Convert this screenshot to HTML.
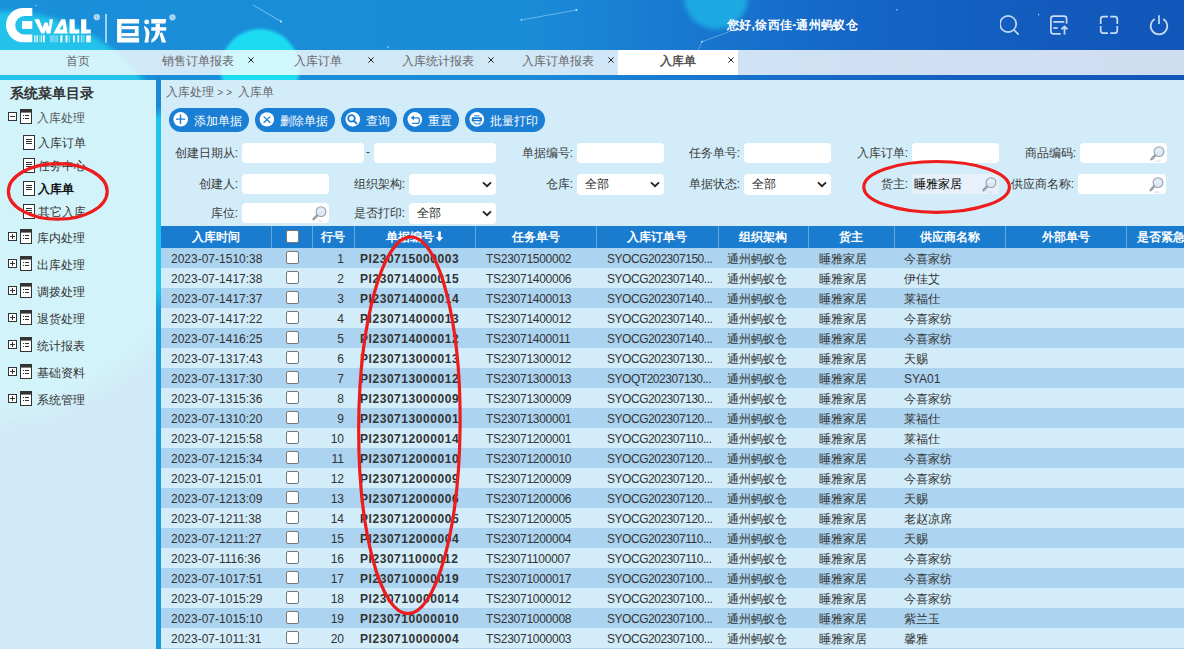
<!DOCTYPE html><html><head><meta charset="utf-8"><style>
*{margin:0;padding:0;box-sizing:border-box}
html,body{width:1184px;height:649px;overflow:hidden}
body{position:relative;background:#d2ecf9;font-family:"Liberation Sans",sans-serif;font-size:12px;color:#333}
.a{position:absolute}
#hdr{left:0;top:0;width:1184px;height:80px;overflow:hidden;background:linear-gradient(90deg,#1a8fda 0%,#1a8bd7 45%,#1878d0 58%,#1566c6 72%,#125bbd 88%,#1156b9 100%)}
#tabbar{left:0;top:50px;width:1184px;height:25px;background:rgba(255,255,255,0.8)}
.tab{position:absolute;top:50px;height:25px;width:120px;line-height:23px;text-align:center;color:#666;font-size:12px}
.tab.act{background:#fff;color:#555;font-weight:bold}
.tx{position:absolute;top:50px;height:25px;line-height:24px;font-size:11px;color:#234;width:10px;text-align:center}
#side{left:0;top:80px;width:156px;height:569px;background:#d0e9f6;overflow:hidden}
#vbar{left:156px;top:75px;width:5px;height:574px;background:linear-gradient(180deg,#1a86d6 0px,#1a8ad8 32px,#1ec6ee 45px,#1ec6ee 215px,#1b9fe0 235px,#1b97dd 574px)}
#main{left:161px;top:80px;width:1023px;height:569px;background:#d2ecf9}
.menu{position:absolute;font-size:12px;color:#333;line-height:14px;white-space:nowrap}
.btn{position:absolute;top:108px;height:24px;border-radius:12px;background:#1a7ed4;color:#fff;font-size:12px;line-height:25px;font-weight:500}
.btn .ic{position:absolute;left:4px;top:4px;width:16px;height:16px}
.btn span{position:absolute;left:25px;top:0.5px}
.lbl{position:absolute;font-size:12px;color:#3a3a3a;text-align:right;line-height:20px;white-space:nowrap}
.inp{position:absolute;height:20px;background:#fff;border-radius:4px}
.sel{position:absolute;height:21px;background:#fff;border-radius:4px;font-size:12px;line-height:21px;padding-left:8px;color:#222}
.chev{position:absolute;right:4px;top:7px;width:10px;height:7px}
.th{position:absolute;top:226px;height:22px;line-height:23px;color:#fff;font-weight:bold;font-size:12px;text-align:center;white-space:nowrap;overflow:hidden}
.sep{position:absolute;top:226px;width:1px;height:22px;background:#5fa8e4}
.row{position:absolute;left:161px;width:1023px;height:20px}
.c{position:absolute;line-height:20px;white-space:nowrap;font-size:12px;color:#333}
.cb{position:absolute;width:13px;height:13px;background:#fff;border:1px solid #777;border-radius:2px}
</style></head><body>
<div id="hdr" class="a">
<svg width="1184" height="80" style="position:absolute;left:0;top:0">
<defs>
<radialGradient id="g1" cx="0.5" cy="0.5" r="0.5"><stop offset="0" stop-color="#2bd0f0"/><stop offset="0.85" stop-color="#22c4ec"/><stop offset="1" stop-color="#22bde9"/></radialGradient>
</defs>
<filter id="bl"><feGaussianBlur stdDeviation="2.5"/></filter><circle cx="1" cy="193" r="182" fill="#22c2eb" filter="url(#bl)"/>
<circle cx="260" cy="68.6" r="39.5" fill="#1fdcf2" filter="url(#bl2)"/><filter id="bl2"><feGaussianBlur stdDeviation="1.5"/></filter>
<circle cx="716" cy="-3" r="32" fill="#1ba9e2" filter="url(#bl)"/>
<line x1="253" y1="5" x2="281" y2="21.5" stroke="#bfe6ff" stroke-width="0.8" opacity="0.75"/><circle cx="281" cy="21.5" r="0.9" fill="#d8f0ff"/>
<line x1="576.4" y1="10" x2="521.3" y2="20" stroke="#a8d8f8" stroke-width="0.8" opacity="0.7"/><circle cx="576.4" cy="10" r="1" fill="#cfeaff"/><circle cx="521.3" cy="20" r="0.8" fill="#cfeaff"/><circle cx="388" cy="47" r="0.8" fill="#cfeaff"/><circle cx="897" cy="9.7" r="0.8" fill="#cfeaff" opacity="0.8"/><circle cx="1038.6" cy="14.6" r="0.8" fill="#cfeaff" opacity="0.8"/><circle cx="36" cy="5.5" r="0.7" fill="#cfeaff" opacity="0.8"/>
<line x1="702" y1="41.7" x2="735" y2="29.5" stroke="#9fd0f5" stroke-width="0.8" opacity="0.6"/><circle cx="702" cy="41.7" r="0.9" fill="#cfeaff"/>
<line x1="702" y1="41.7" x2="697" y2="52" stroke="#9fd0f5" stroke-width="0.8" opacity="0.6"/>
</svg>
<svg width="200" height="50" style="position:absolute;left:0;top:0" fill="#fff">
<path d="M32.3,7.9 H23.1 A17.1,17.1 0 0 0 23.1,42.2 H32.3 V34.4 H24.4 A9.2,9.2 0 0 1 24.4,16 H32.3 Z"/>
<rect x="22" y="21.1" width="10.3" height="7.8"/>
<path d="M34.3,19.2 H39.2 L42.6,28 L44.5,22.5 L47.5,22.5 L49.2,27.5 L49.5,19.2 H53.1 L50.5,33.5 H46.8 L45.8,30 L44.4,33.5 H41.3 Z"/>
<path d="M53.4,33.5 L61.3,19.2 H65.3 L67.7,33.5 Z M59.4,29.6 H63.3 L62.6,24.4 Z" fill-rule="evenodd"/>
<path d="M69.5,19.2 H74.7 V29.5 H79.3 V33.5 H69.5 Z"/>
<path d="M81.1,19.2 H86.3 V29.5 H90.8 V33.5 H81.1 Z"/>
<g opacity="0.95">
<rect x="34.2" y="35.3" width="1.2" height="7"/><rect x="36.4" y="35.3" width="1.4" height="7"/>
<rect x="39.5" y="35.3" width="0.9" height="7" opacity="0.7"/><rect x="41.2" y="35.3" width="0.9" height="7"/><rect x="43" y="35.3" width="1.8" height="7"/>
<rect x="50.2" y="35.3" width="0.6" height="7" opacity="0.6"/><rect x="51.3" y="35.3" width="0.6" height="7" opacity="0.6"/><rect x="52.4" y="35.3" width="0.6" height="7" opacity="0.6"/><rect x="53.5" y="35.3" width="0.6" height="7" opacity="0.6"/><rect x="54.6" y="35.3" width="0.6" height="7" opacity="0.6"/><rect x="55.7" y="35.3" width="0.6" height="7" opacity="0.6"/><rect x="56.8" y="35.3" width="0.8" height="7" opacity="0.7"/>
<rect x="60.3" y="35.3" width="2.2" height="7"/><rect x="65.5" y="35.3" width="2" height="7"/><rect x="68.8" y="35.3" width="0.8" height="7" opacity="0.7"/>
<rect x="73" y="35.3" width="1.8" height="7"/><rect x="77.5" y="35.3" width="1.6" height="7"/><rect x="81.3" y="35.3" width="0.8" height="7"/><rect x="83.5" y="35.3" width="0.8" height="7" opacity="0.7"/>
<rect x="86.3" y="35.3" width="4.5" height="7"/>
</g>
<circle cx="96.8" cy="17.2" r="3.1" fill="#b8dcf5"/><circle cx="96.2" cy="16.2" r="0.7" fill="#5aaee6"/><circle cx="98.2" cy="17.4" r="0.6" fill="#5aaee6"/><circle cx="96.5" cy="18.6" r="0.6" fill="#5aaee6"/>
<rect x="105" y="14" width="2" height="28.7" fill="#9fd4f4"/>
<path d="M117.1,19.1 H139.1 V23.6 H121.5 V37.8 H139.1 V42.6 H117.1 Z"/>
<path d="M121.5,25.9 H138.6 V36.3 H121.5 V33 H134.8 V29.2 H121.5 Z"/>
<circle cx="146.7" cy="21.9" r="2.4"/>
<path d="M143.9,25.7 C148,27.5 150.2,31 149.3,35 C148.8,38 148.3,40.5 148.5,42.6 H144.4 C145,39 146,36 145.7,33 C145.4,30.5 144.5,28.5 143.9,25.7 Z"/>
<path d="M151.3,19.1 H166.2 L165.5,23.6 H151.3 Z"/>
<path d="M151.3,27.2 H166.2 V30.7 H151.3 Z"/>
<path d="M155.6,23.6 H159.9 V30.7 H155.6 Z"/>
<path d="M155.6,30.7 H159.9 C159.5,36 156.5,40.5 151.8,42.6 H151.2 L151.5,39.5 C154,38 155.4,34.5 155.6,30.7 Z"/>
<path d="M159.4,33 L162.3,32.6 L166.2,42.6 H161.8 Z"/>
<circle cx="172.5" cy="17.3" r="3.1" fill="#b8dcf5"/><circle cx="171.9" cy="16.3" r="0.7" fill="#5aaee6"/><circle cx="173.9" cy="17.5" r="0.6" fill="#5aaee6"/><circle cx="172.2" cy="18.7" r="0.6" fill="#5aaee6"/>
</svg>
<div class="a" style="left:727px;top:17.7px;color:#fff;font-weight:bold;font-size:12px;line-height:14px;white-space:nowrap;letter-spacing:0.3px">您好,徐西佳-通州蚂蚁仓</div>
<svg width="184" height="50" style="position:absolute;left:1000px;top:0" fill="none" stroke="#c9dbf3" stroke-width="1.7" stroke-linejoin="round">
<circle cx="8.1" cy="24" r="8.1"/><line x1="14" y1="30" x2="18.2" y2="34.1" stroke-linecap="round"/>
<path d="M66.6,23.8 V18.7 a2.5,2.5 0 0 0 -2.5,-2.5 H53.4 a2.5,2.5 0 0 0 -2.5,2.5 V31.3 a2.5,2.5 0 0 0 2.5,2.5 H60.7"/>
<line x1="53.3" y1="21.9" x2="64.3" y2="21.9"/><line x1="53.3" y1="28" x2="57.8" y2="28"/>
<path d="M64.5,34.4 V26.6 M61.5,29.4 L64.5,26.4 L67.5,29.4"/>
<path d="M100.7,24 V19.2 a2.5,2.5 0 0 1 2.5,-2.5 H108 M110.2,16.7 H114.8 a2.5,2.5 0 0 1 2.5,2.5 V24 M117.3,26 V30.6 a2.5,2.5 0 0 1 -2.5,2.5 H110.2 M108,33.1 H103.2 a2.5,2.5 0 0 1 -2.5,-2.5 V26"/>
<path d="M154.8,18.9 A8.3,8.3 0 1 0 163.2,18.9"/><line x1="159" y1="15.2" x2="159" y2="24"/>
</svg>
</div>
<div id="tabbar" class="a"></div>
<div class="tab" style="left:18px">首页</div>
<div class="tab" style="left:138px">销售订单报表</div>
<svg class="a" style="left:247.5px;top:56.5px" width="6" height="6"><path d="M0.4,0.4 L5.6,5.6 M5.6,0.4 L0.4,5.6" stroke="#222" stroke-width="1"/></svg>
<div class="tab" style="left:258px">入库订单</div>
<svg class="a" style="left:367.5px;top:56.5px" width="6" height="6"><path d="M0.4,0.4 L5.6,5.6 M5.6,0.4 L0.4,5.6" stroke="#222" stroke-width="1"/></svg>
<div class="tab" style="left:378px">入库统计报表</div>
<svg class="a" style="left:487.5px;top:56.5px" width="6" height="6"><path d="M0.4,0.4 L5.6,5.6 M5.6,0.4 L0.4,5.6" stroke="#222" stroke-width="1"/></svg>
<div class="tab" style="left:498px">入库订单报表</div>
<svg class="a" style="left:607.5px;top:56.5px" width="6" height="6"><path d="M0.4,0.4 L5.6,5.6 M5.6,0.4 L0.4,5.6" stroke="#222" stroke-width="1"/></svg>
<div class="tab act" style="left:618px">入库单</div>
<svg class="a" style="left:727.5px;top:56.5px" width="6" height="6"><path d="M0.4,0.4 L5.6,5.6 M5.6,0.4 L0.4,5.6" stroke="#222" stroke-width="1"/></svg>
<div id="side" class="a"><svg width="156" height="569" style="position:absolute;left:0;top:0"><filter id="bl3" x="-50%" y="-50%" width="200%" height="200%"><feGaussianBlur stdDeviation="12"/></filter><circle cx="-20" cy="100" r="240" fill="#d3f3fb" filter="url(#bl3)"/></svg></div>
<div id="vbar" class="a"></div>
<div class="menu" style="left:10px;top:86px;font-size:14px;line-height:15px;font-weight:bold;color:#333">系统菜单目录</div>
<svg class="a" style="left:8px;top:112px" width="10" height="10"><rect x="0.5" y="0.5" width="8" height="8" fill="#fff" stroke="#333"/><line x1="2" y1="4.5" x2="7" y2="4.5" stroke="#333"/></svg>
<svg class="a" style="left:20px;top:109px" width="13" height="16"><rect x="0.5" y="0.5" width="11" height="14" fill="#fff" stroke="#333"/><rect x="0" y="0" width="12" height="3.6" fill="#333"/><rect x="3" y="6" width="1" height="1" fill="#333"/><rect x="5" y="6" width="4" height="1" fill="#333"/><rect x="3" y="9" width="1" height="1" fill="#333"/><rect x="5" y="9" width="4" height="1" fill="#333"/></svg>
<div class="menu" style="left:37px;top:111px;color:#555">入库处理</div>
<svg class="a" style="left:23px;top:135px" width="13" height="16"><rect x="0.5" y="0.5" width="11" height="14" fill="#fff" stroke="#333"/><rect x="3" y="4" width="6" height="1" fill="#333"/><rect x="3" y="6" width="6" height="1" fill="#333"/><rect x="3" y="8" width="6" height="1" fill="#333"/></svg>
<div class="menu" style="left:38px;top:136px;">入库订单</div>
<svg class="a" style="left:23px;top:158px" width="13" height="16"><rect x="0.5" y="0.5" width="11" height="14" fill="#fff" stroke="#333"/><rect x="3" y="4" width="6" height="1" fill="#333"/><rect x="3" y="6" width="6" height="1" fill="#333"/><rect x="3" y="8" width="6" height="1" fill="#333"/></svg>
<div class="menu" style="left:38px;top:159px;">任务中心</div>
<svg class="a" style="left:23px;top:181px" width="13" height="16"><rect x="0.5" y="0.5" width="11" height="14" fill="#fff" stroke="#333"/><rect x="3" y="4" width="6" height="1" fill="#333"/><rect x="3" y="6" width="6" height="1" fill="#333"/><rect x="3" y="8" width="6" height="1" fill="#333"/></svg>
<div class="menu" style="left:38px;top:182px;font-weight:bold;color:#111">入库单</div>
<svg class="a" style="left:23px;top:204px" width="13" height="16"><rect x="0.5" y="0.5" width="11" height="14" fill="#fff" stroke="#333"/><rect x="3" y="4" width="6" height="1" fill="#333"/><rect x="3" y="6" width="6" height="1" fill="#333"/><rect x="3" y="8" width="6" height="1" fill="#333"/></svg>
<div class="menu" style="left:38px;top:205px;">其它入库</div>
<svg class="a" style="left:8px;top:232px" width="10" height="10"><rect x="0.5" y="0.5" width="8" height="8" fill="#fff" stroke="#333"/><line x1="2" y1="4.5" x2="7" y2="4.5" stroke="#333"/><line x1="4.5" y1="2" x2="4.5" y2="7" stroke="#333"/></svg>
<svg class="a" style="left:20px;top:229px" width="13" height="16"><rect x="0.5" y="0.5" width="11" height="14" fill="#fff" stroke="#333"/><rect x="0" y="0" width="12" height="3.6" fill="#333"/><rect x="3" y="6" width="1" height="1" fill="#333"/><rect x="5" y="6" width="4" height="1" fill="#333"/><rect x="3" y="9" width="1" height="1" fill="#333"/><rect x="5" y="9" width="4" height="1" fill="#333"/></svg>
<div class="menu" style="left:37px;top:231px">库内处理</div>
<svg class="a" style="left:8px;top:259px" width="10" height="10"><rect x="0.5" y="0.5" width="8" height="8" fill="#fff" stroke="#333"/><line x1="2" y1="4.5" x2="7" y2="4.5" stroke="#333"/><line x1="4.5" y1="2" x2="4.5" y2="7" stroke="#333"/></svg>
<svg class="a" style="left:20px;top:256px" width="13" height="16"><rect x="0.5" y="0.5" width="11" height="14" fill="#fff" stroke="#333"/><rect x="0" y="0" width="12" height="3.6" fill="#333"/><rect x="3" y="6" width="1" height="1" fill="#333"/><rect x="5" y="6" width="4" height="1" fill="#333"/><rect x="3" y="9" width="1" height="1" fill="#333"/><rect x="5" y="9" width="4" height="1" fill="#333"/></svg>
<div class="menu" style="left:37px;top:258px">出库处理</div>
<svg class="a" style="left:8px;top:286px" width="10" height="10"><rect x="0.5" y="0.5" width="8" height="8" fill="#fff" stroke="#333"/><line x1="2" y1="4.5" x2="7" y2="4.5" stroke="#333"/><line x1="4.5" y1="2" x2="4.5" y2="7" stroke="#333"/></svg>
<svg class="a" style="left:20px;top:283px" width="13" height="16"><rect x="0.5" y="0.5" width="11" height="14" fill="#fff" stroke="#333"/><rect x="0" y="0" width="12" height="3.6" fill="#333"/><rect x="3" y="6" width="1" height="1" fill="#333"/><rect x="5" y="6" width="4" height="1" fill="#333"/><rect x="3" y="9" width="1" height="1" fill="#333"/><rect x="5" y="9" width="4" height="1" fill="#333"/></svg>
<div class="menu" style="left:37px;top:285px">调拨处理</div>
<svg class="a" style="left:8px;top:313px" width="10" height="10"><rect x="0.5" y="0.5" width="8" height="8" fill="#fff" stroke="#333"/><line x1="2" y1="4.5" x2="7" y2="4.5" stroke="#333"/><line x1="4.5" y1="2" x2="4.5" y2="7" stroke="#333"/></svg>
<svg class="a" style="left:20px;top:310px" width="13" height="16"><rect x="0.5" y="0.5" width="11" height="14" fill="#fff" stroke="#333"/><rect x="0" y="0" width="12" height="3.6" fill="#333"/><rect x="3" y="6" width="1" height="1" fill="#333"/><rect x="5" y="6" width="4" height="1" fill="#333"/><rect x="3" y="9" width="1" height="1" fill="#333"/><rect x="5" y="9" width="4" height="1" fill="#333"/></svg>
<div class="menu" style="left:37px;top:312px">退货处理</div>
<svg class="a" style="left:8px;top:340px" width="10" height="10"><rect x="0.5" y="0.5" width="8" height="8" fill="#fff" stroke="#333"/><line x1="2" y1="4.5" x2="7" y2="4.5" stroke="#333"/><line x1="4.5" y1="2" x2="4.5" y2="7" stroke="#333"/></svg>
<svg class="a" style="left:20px;top:337px" width="13" height="16"><rect x="0.5" y="0.5" width="11" height="14" fill="#fff" stroke="#333"/><rect x="0" y="0" width="12" height="3.6" fill="#333"/><rect x="3" y="6" width="1" height="1" fill="#333"/><rect x="5" y="6" width="4" height="1" fill="#333"/><rect x="3" y="9" width="1" height="1" fill="#333"/><rect x="5" y="9" width="4" height="1" fill="#333"/></svg>
<div class="menu" style="left:37px;top:339px">统计报表</div>
<svg class="a" style="left:8px;top:367px" width="10" height="10"><rect x="0.5" y="0.5" width="8" height="8" fill="#fff" stroke="#333"/><line x1="2" y1="4.5" x2="7" y2="4.5" stroke="#333"/><line x1="4.5" y1="2" x2="4.5" y2="7" stroke="#333"/></svg>
<svg class="a" style="left:20px;top:364px" width="13" height="16"><rect x="0.5" y="0.5" width="11" height="14" fill="#fff" stroke="#333"/><rect x="0" y="0" width="12" height="3.6" fill="#333"/><rect x="3" y="6" width="1" height="1" fill="#333"/><rect x="5" y="6" width="4" height="1" fill="#333"/><rect x="3" y="9" width="1" height="1" fill="#333"/><rect x="5" y="9" width="4" height="1" fill="#333"/></svg>
<div class="menu" style="left:37px;top:366px">基础资料</div>
<svg class="a" style="left:8px;top:394px" width="10" height="10"><rect x="0.5" y="0.5" width="8" height="8" fill="#fff" stroke="#333"/><line x1="2" y1="4.5" x2="7" y2="4.5" stroke="#333"/><line x1="4.5" y1="2" x2="4.5" y2="7" stroke="#333"/></svg>
<svg class="a" style="left:20px;top:391px" width="13" height="16"><rect x="0.5" y="0.5" width="11" height="14" fill="#fff" stroke="#333"/><rect x="0" y="0" width="12" height="3.6" fill="#333"/><rect x="3" y="6" width="1" height="1" fill="#333"/><rect x="5" y="6" width="4" height="1" fill="#333"/><rect x="3" y="9" width="1" height="1" fill="#333"/><rect x="5" y="9" width="4" height="1" fill="#333"/></svg>
<div class="menu" style="left:37px;top:393px">系统管理</div>
<div class="a" style="left:166px;top:85px;font-size:12px;color:#666;line-height:14px;white-space:nowrap">入库处理 <span style="font-size:10px;letter-spacing:3px;vertical-align:0.5px">&gt;</span><span style="font-size:10px;vertical-align:0.5px">&gt;</span><span style="letter-spacing:3px"> </span>入库单</div>
<div class="btn" style="left:169px;width:80px"><svg class="ic" width="16" height="16"><circle cx="7.7" cy="7.3" r="7.3" fill="#fff"/><path d="M7.5,2.6 V11.9 M3,7.1 H12.2" stroke="#1a7ed4" stroke-width="1.4"/></svg><span>添加单据</span></div>
<div class="btn" style="left:255px;width:80px"><svg class="ic" width="16" height="16"><circle cx="7.9" cy="7.4" r="7.2" fill="#fff"/><path d="M5,4.9 L10.9,10.5 M10.9,4.9 L5,10.5" stroke="#1a7ed4" stroke-width="1.3" stroke-linecap="round"/></svg><span>删除单据</span></div>
<div class="btn" style="left:341px;width:56px"><svg class="ic" width="16" height="16"><circle cx="7.8" cy="7.4" r="7.3" fill="#fff"/><circle cx="6.5" cy="6.4" r="3.3" fill="none" stroke="#1a7ed4" stroke-width="1.8"/><path d="M8.8,8.8 L11.5,11.4" stroke="#1a7ed4" stroke-width="1.9" stroke-linecap="round"/></svg><span>查询</span></div>
<div class="btn" style="left:403px;width:56px"><svg class="ic" width="16" height="16"><circle cx="7.8" cy="7.4" r="7.3" fill="#fff"/><path d="M6.5,5.8 H11 Q12.3,5.8 12.3,7.6 V9.3 Q12.3,11.3 10.5,11.3 H5.2" fill="none" stroke="#1a7ed4" stroke-width="1.3"/><path d="M3.6,5.8 L7,3.4 L7,8.2 Z" fill="#1a7ed4"/></svg><span>重置</span></div>
<div class="btn" style="left:465px;width:80px"><svg class="ic" width="16" height="16"><circle cx="7.8" cy="7.4" r="7.3" fill="#fff"/><rect x="5" y="3.3" width="5.6" height="1" fill="#1a7ed4"/><rect x="2.7" y="5.3" width="10.2" height="4.2" rx="0.8" fill="#1a7ed4"/><rect x="4.8" y="7.2" width="6" height="0.8" fill="#fff"/><path d="M4.5,9.5 L6.3,12 H11 L11,9.5" fill="#fff" stroke="#1a7ed4" stroke-width="1"/></svg><span>批量打印</span></div>
<div class="lbl" style="left:78px;width:160px;top:143px">创建日期从:</div>
<div class="inp" style="left:242px;top:143px;width:122px"></div>
<div class="a" style="left:366px;top:143px;line-height:18px;color:#444">-</div>
<div class="inp" style="left:374px;top:143px;width:122px"></div>
<div class="lbl" style="left:413px;width:160px;top:143px">单据编号:</div>
<div class="inp" style="left:577px;top:143px;width:87px"></div>
<div class="lbl" style="left:580px;width:160px;top:143px">任务单号:</div>
<div class="inp" style="left:744px;top:143px;width:87px"></div>
<div class="lbl" style="left:748px;width:160px;top:143px">入库订单:</div>
<div class="inp" style="left:912px;top:143px;width:87px"></div>
<div class="lbl" style="left:916px;width:160px;top:143px">商品编码:</div>
<div class="inp" style="left:1080px;top:143px;width:87px"><svg class="a" style="right:1.5px;top:2px" width="17" height="17"><defs><linearGradient id="sh" x1="0" x2="1"><stop offset="0" stop-color="#fff" stop-opacity="0"/><stop offset="0.5" stop-color="#c8ccd0"/><stop offset="1" stop-color="#fff" stop-opacity="0"/></linearGradient></defs><rect x="3" y="15.6" width="12" height="1" fill="url(#sh)"/><path d="M6.4,10.2 L2.6,14.2" stroke="#8c949c" stroke-width="2.4" stroke-linecap="round"/><path d="M6.4,10.2 L2.6,14.2" stroke="#e6e8ea" stroke-width="0.8" stroke-dasharray="1,1"/><circle cx="10" cy="6.6" r="4.9" fill="#dce8f5" stroke="#9aa2aa" stroke-width="1.1"/><path d="M6.5,6.5 Q8.5,4.5 13.5,5" fill="none" stroke="#f4f8fc" stroke-width="0.9"/></svg></div>
<div class="lbl" style="left:78px;width:160px;top:174px">创建人:</div>
<div class="inp" style="left:242px;top:174px;width:87px"></div>
<div class="lbl" style="left:245px;width:160px;top:174px">组织架构:</div>
<div class="sel" style="left:409px;top:174px;width:87px"><svg class="chev" width="10" height="7"><path d="M1,1.3 L5,5.2 L9,1.3" fill="none" stroke="#222" stroke-width="1.8"/></svg></div>
<div class="lbl" style="left:413px;width:160px;top:174px">仓库:</div>
<div class="sel" style="left:577px;top:174px;width:87px">全部<svg class="chev" width="10" height="7"><path d="M1,1.3 L5,5.2 L9,1.3" fill="none" stroke="#222" stroke-width="1.8"/></svg></div>
<div class="lbl" style="left:580px;width:160px;top:174px">单据状态:</div>
<div class="sel" style="left:744px;top:174px;width:87px">全部<svg class="chev" width="10" height="7"><path d="M1,1.3 L5,5.2 L9,1.3" fill="none" stroke="#222" stroke-width="1.8"/></svg></div>
<div class="lbl" style="left:748px;width:160px;top:174px">货主:</div>
<div class="inp" style="left:912px;top:174px;width:87px;background:#e8f0fb;line-height:20px;padding-left:2px;color:#000;font-size:12px">睡雅家居<svg class="a" style="right:1.5px;top:2px" width="17" height="17"><defs><linearGradient id="sh" x1="0" x2="1"><stop offset="0" stop-color="#fff" stop-opacity="0"/><stop offset="0.5" stop-color="#c8ccd0"/><stop offset="1" stop-color="#fff" stop-opacity="0"/></linearGradient></defs><rect x="3" y="15.6" width="12" height="1" fill="url(#sh)"/><path d="M6.4,10.2 L2.6,14.2" stroke="#8c949c" stroke-width="2.4" stroke-linecap="round"/><path d="M6.4,10.2 L2.6,14.2" stroke="#e6e8ea" stroke-width="0.8" stroke-dasharray="1,1"/><circle cx="10" cy="6.6" r="4.9" fill="#dce8f5" stroke="#9aa2aa" stroke-width="1.1"/><path d="M6.5,6.5 Q8.5,4.5 13.5,5" fill="none" stroke="#f4f8fc" stroke-width="0.9"/></svg></div>
<div class="lbl" style="left:914px;width:160px;top:174px">供应商名称:</div>
<div class="inp" style="left:1078px;top:174px;width:88px"><svg class="a" style="right:1.5px;top:2px" width="17" height="17"><defs><linearGradient id="sh" x1="0" x2="1"><stop offset="0" stop-color="#fff" stop-opacity="0"/><stop offset="0.5" stop-color="#c8ccd0"/><stop offset="1" stop-color="#fff" stop-opacity="0"/></linearGradient></defs><rect x="3" y="15.6" width="12" height="1" fill="url(#sh)"/><path d="M6.4,10.2 L2.6,14.2" stroke="#8c949c" stroke-width="2.4" stroke-linecap="round"/><path d="M6.4,10.2 L2.6,14.2" stroke="#e6e8ea" stroke-width="0.8" stroke-dasharray="1,1"/><circle cx="10" cy="6.6" r="4.9" fill="#dce8f5" stroke="#9aa2aa" stroke-width="1.1"/><path d="M6.5,6.5 Q8.5,4.5 13.5,5" fill="none" stroke="#f4f8fc" stroke-width="0.9"/></svg></div>
<div class="lbl" style="left:78px;width:160px;top:203px">库位:</div>
<div class="inp" style="left:242px;top:203px;width:87px"><svg class="a" style="right:1.5px;top:2px" width="17" height="17"><defs><linearGradient id="sh" x1="0" x2="1"><stop offset="0" stop-color="#fff" stop-opacity="0"/><stop offset="0.5" stop-color="#c8ccd0"/><stop offset="1" stop-color="#fff" stop-opacity="0"/></linearGradient></defs><rect x="3" y="15.6" width="12" height="1" fill="url(#sh)"/><path d="M6.4,10.2 L2.6,14.2" stroke="#8c949c" stroke-width="2.4" stroke-linecap="round"/><path d="M6.4,10.2 L2.6,14.2" stroke="#e6e8ea" stroke-width="0.8" stroke-dasharray="1,1"/><circle cx="10" cy="6.6" r="4.9" fill="#dce8f5" stroke="#9aa2aa" stroke-width="1.1"/><path d="M6.5,6.5 Q8.5,4.5 13.5,5" fill="none" stroke="#f4f8fc" stroke-width="0.9"/></svg></div>
<div class="lbl" style="left:245px;width:160px;top:203px">是否打印:</div>
<div class="sel" style="left:409px;top:203px;width:87px">全部<svg class="chev" width="10" height="7"><path d="M1,1.3 L5,5.2 L9,1.3" fill="none" stroke="#222" stroke-width="1.8"/></svg></div>
<div class="a" style="left:161px;top:226px;width:1023px;height:22px;background:#1a7ccf"></div>
<div class="th" style="left:161px;width:110px">入库时间</div>
<div class="cb" style="left:286px;top:230px"></div>
<div class="sep" style="left:271px"></div>
<div class="th" style="left:312px;width:42px">行号</div>
<div class="sep" style="left:312px"></div>
<div class="th" style="left:354px;width:121px">单据编号<svg width="9" height="11" style="vertical-align:-1px;margin-left:1px"><path d="M4.5,10.5 L0.8,6.3 H3.2 V0.5 H5.8 V6.3 H8.2 Z" fill="#fff"/></svg></div>
<div class="sep" style="left:354px"></div>
<div class="th" style="left:475px;width:121px">任务单号</div>
<div class="sep" style="left:475px"></div>
<div class="th" style="left:596px;width:122px">入库订单号</div>
<div class="sep" style="left:596px"></div>
<div class="th" style="left:718px;width:90px">组织架构</div>
<div class="sep" style="left:718px"></div>
<div class="th" style="left:808px;width:86px">货主</div>
<div class="sep" style="left:808px"></div>
<div class="th" style="left:894px;width:111px">供应商名称</div>
<div class="sep" style="left:894px"></div>
<div class="th" style="left:1005px;width:121px">外部单号</div>
<div class="sep" style="left:1005px"></div>
<div class="th" style="left:1126px;width:70px">是否紧急</div>
<div class="sep" style="left:1126px"></div>
<div class="row" style="top:248px;background:#acd3ef"></div>
<div class="c" style="left:171px;top:249px">2023-07-1510:38</div>
<div class="cb" style="left:286px;top:251px"></div>
<div class="c" style="left:312px;width:32px;text-align:right;top:249px">1</div>
<div class="c" style="left:360px;top:249px;font-weight:bold;letter-spacing:0.55px">PI230715000003</div>
<div class="c" style="left:486px;top:249px;letter-spacing:-0.27px">TS23071500002</div>
<div class="c" style="left:607px;top:249px;letter-spacing:-0.47px">SYOCG202307150...</div>
<div class="c" style="left:727px;top:249px">通州蚂蚁仓</div>
<div class="c" style="left:819px;top:249px">睡雅家居</div>
<div class="c" style="left:904px;top:249px">今喜家纺</div>
<div class="row" style="top:268px;background:#d2ecf9"></div>
<div class="c" style="left:171px;top:269px">2023-07-1417:38</div>
<div class="cb" style="left:286px;top:271px"></div>
<div class="c" style="left:312px;width:32px;text-align:right;top:269px">2</div>
<div class="c" style="left:360px;top:269px;font-weight:bold;letter-spacing:0.55px">PI230714000015</div>
<div class="c" style="left:486px;top:269px;letter-spacing:-0.27px">TS23071400006</div>
<div class="c" style="left:607px;top:269px;letter-spacing:-0.47px">SYOCG202307140...</div>
<div class="c" style="left:727px;top:269px">通州蚂蚁仓</div>
<div class="c" style="left:819px;top:269px">睡雅家居</div>
<div class="c" style="left:904px;top:269px">伊佳艾</div>
<div class="row" style="top:288px;background:#acd3ef"></div>
<div class="c" style="left:171px;top:289px">2023-07-1417:37</div>
<div class="cb" style="left:286px;top:291px"></div>
<div class="c" style="left:312px;width:32px;text-align:right;top:289px">3</div>
<div class="c" style="left:360px;top:289px;font-weight:bold;letter-spacing:0.55px">PI230714000014</div>
<div class="c" style="left:486px;top:289px;letter-spacing:-0.27px">TS23071400013</div>
<div class="c" style="left:607px;top:289px;letter-spacing:-0.47px">SYOCG202307140...</div>
<div class="c" style="left:727px;top:289px">通州蚂蚁仓</div>
<div class="c" style="left:819px;top:289px">睡雅家居</div>
<div class="c" style="left:904px;top:289px">莱福仕</div>
<div class="row" style="top:308px;background:#d2ecf9"></div>
<div class="c" style="left:171px;top:309px">2023-07-1417:22</div>
<div class="cb" style="left:286px;top:311px"></div>
<div class="c" style="left:312px;width:32px;text-align:right;top:309px">4</div>
<div class="c" style="left:360px;top:309px;font-weight:bold;letter-spacing:0.55px">PI230714000013</div>
<div class="c" style="left:486px;top:309px;letter-spacing:-0.27px">TS23071400012</div>
<div class="c" style="left:607px;top:309px;letter-spacing:-0.47px">SYOCG202307140...</div>
<div class="c" style="left:727px;top:309px">通州蚂蚁仓</div>
<div class="c" style="left:819px;top:309px">睡雅家居</div>
<div class="c" style="left:904px;top:309px">今喜家纺</div>
<div class="row" style="top:328px;background:#acd3ef"></div>
<div class="c" style="left:171px;top:329px">2023-07-1416:25</div>
<div class="cb" style="left:286px;top:331px"></div>
<div class="c" style="left:312px;width:32px;text-align:right;top:329px">5</div>
<div class="c" style="left:360px;top:329px;font-weight:bold;letter-spacing:0.55px">PI230714000012</div>
<div class="c" style="left:486px;top:329px;letter-spacing:-0.27px">TS23071400011</div>
<div class="c" style="left:607px;top:329px;letter-spacing:-0.47px">SYOCG202307140...</div>
<div class="c" style="left:727px;top:329px">通州蚂蚁仓</div>
<div class="c" style="left:819px;top:329px">睡雅家居</div>
<div class="c" style="left:904px;top:329px">今喜家纺</div>
<div class="row" style="top:348px;background:#d2ecf9"></div>
<div class="c" style="left:171px;top:349px">2023-07-1317:43</div>
<div class="cb" style="left:286px;top:351px"></div>
<div class="c" style="left:312px;width:32px;text-align:right;top:349px">6</div>
<div class="c" style="left:360px;top:349px;font-weight:bold;letter-spacing:0.55px">PI230713000013</div>
<div class="c" style="left:486px;top:349px;letter-spacing:-0.27px">TS23071300012</div>
<div class="c" style="left:607px;top:349px;letter-spacing:-0.47px">SYOCG202307130...</div>
<div class="c" style="left:727px;top:349px">通州蚂蚁仓</div>
<div class="c" style="left:819px;top:349px">睡雅家居</div>
<div class="c" style="left:904px;top:349px">天赐</div>
<div class="row" style="top:368px;background:#acd3ef"></div>
<div class="c" style="left:171px;top:369px">2023-07-1317:30</div>
<div class="cb" style="left:286px;top:371px"></div>
<div class="c" style="left:312px;width:32px;text-align:right;top:369px">7</div>
<div class="c" style="left:360px;top:369px;font-weight:bold;letter-spacing:0.55px">PI230713000012</div>
<div class="c" style="left:486px;top:369px;letter-spacing:-0.27px">TS23071300013</div>
<div class="c" style="left:607px;top:369px;letter-spacing:-0.47px">SYOQT202307130...</div>
<div class="c" style="left:727px;top:369px">通州蚂蚁仓</div>
<div class="c" style="left:819px;top:369px">睡雅家居</div>
<div class="c" style="left:904px;top:369px">SYA01</div>
<div class="row" style="top:388px;background:#d2ecf9"></div>
<div class="c" style="left:171px;top:389px">2023-07-1315:36</div>
<div class="cb" style="left:286px;top:391px"></div>
<div class="c" style="left:312px;width:32px;text-align:right;top:389px">8</div>
<div class="c" style="left:360px;top:389px;font-weight:bold;letter-spacing:0.55px">PI230713000009</div>
<div class="c" style="left:486px;top:389px;letter-spacing:-0.27px">TS23071300009</div>
<div class="c" style="left:607px;top:389px;letter-spacing:-0.47px">SYOCG202307130...</div>
<div class="c" style="left:727px;top:389px">通州蚂蚁仓</div>
<div class="c" style="left:819px;top:389px">睡雅家居</div>
<div class="c" style="left:904px;top:389px">今喜家纺</div>
<div class="row" style="top:408px;background:#acd3ef"></div>
<div class="c" style="left:171px;top:409px">2023-07-1310:20</div>
<div class="cb" style="left:286px;top:411px"></div>
<div class="c" style="left:312px;width:32px;text-align:right;top:409px">9</div>
<div class="c" style="left:360px;top:409px;font-weight:bold;letter-spacing:0.55px">PI230713000001</div>
<div class="c" style="left:486px;top:409px;letter-spacing:-0.27px">TS23071300001</div>
<div class="c" style="left:607px;top:409px;letter-spacing:-0.47px">SYOCG202307120...</div>
<div class="c" style="left:727px;top:409px">通州蚂蚁仓</div>
<div class="c" style="left:819px;top:409px">睡雅家居</div>
<div class="c" style="left:904px;top:409px">莱福仕</div>
<div class="row" style="top:428px;background:#d2ecf9"></div>
<div class="c" style="left:171px;top:429px">2023-07-1215:58</div>
<div class="cb" style="left:286px;top:431px"></div>
<div class="c" style="left:312px;width:32px;text-align:right;top:429px">10</div>
<div class="c" style="left:360px;top:429px;font-weight:bold;letter-spacing:0.55px">PI230712000014</div>
<div class="c" style="left:486px;top:429px;letter-spacing:-0.27px">TS23071200001</div>
<div class="c" style="left:607px;top:429px;letter-spacing:-0.47px">SYOCG202307110...</div>
<div class="c" style="left:727px;top:429px">通州蚂蚁仓</div>
<div class="c" style="left:819px;top:429px">睡雅家居</div>
<div class="c" style="left:904px;top:429px">莱福仕</div>
<div class="row" style="top:448px;background:#acd3ef"></div>
<div class="c" style="left:171px;top:449px">2023-07-1215:34</div>
<div class="cb" style="left:286px;top:451px"></div>
<div class="c" style="left:312px;width:32px;text-align:right;top:449px">11</div>
<div class="c" style="left:360px;top:449px;font-weight:bold;letter-spacing:0.55px">PI230712000010</div>
<div class="c" style="left:486px;top:449px;letter-spacing:-0.27px">TS23071200010</div>
<div class="c" style="left:607px;top:449px;letter-spacing:-0.47px">SYOCG202307120...</div>
<div class="c" style="left:727px;top:449px">通州蚂蚁仓</div>
<div class="c" style="left:819px;top:449px">睡雅家居</div>
<div class="c" style="left:904px;top:449px">今喜家纺</div>
<div class="row" style="top:468px;background:#d2ecf9"></div>
<div class="c" style="left:171px;top:469px">2023-07-1215:01</div>
<div class="cb" style="left:286px;top:471px"></div>
<div class="c" style="left:312px;width:32px;text-align:right;top:469px">12</div>
<div class="c" style="left:360px;top:469px;font-weight:bold;letter-spacing:0.55px">PI230712000009</div>
<div class="c" style="left:486px;top:469px;letter-spacing:-0.27px">TS23071200009</div>
<div class="c" style="left:607px;top:469px;letter-spacing:-0.47px">SYOCG202307120...</div>
<div class="c" style="left:727px;top:469px">通州蚂蚁仓</div>
<div class="c" style="left:819px;top:469px">睡雅家居</div>
<div class="c" style="left:904px;top:469px">今喜家纺</div>
<div class="row" style="top:488px;background:#acd3ef"></div>
<div class="c" style="left:171px;top:489px">2023-07-1213:09</div>
<div class="cb" style="left:286px;top:491px"></div>
<div class="c" style="left:312px;width:32px;text-align:right;top:489px">13</div>
<div class="c" style="left:360px;top:489px;font-weight:bold;letter-spacing:0.55px">PI230712000006</div>
<div class="c" style="left:486px;top:489px;letter-spacing:-0.27px">TS23071200006</div>
<div class="c" style="left:607px;top:489px;letter-spacing:-0.47px">SYOCG202307120...</div>
<div class="c" style="left:727px;top:489px">通州蚂蚁仓</div>
<div class="c" style="left:819px;top:489px">睡雅家居</div>
<div class="c" style="left:904px;top:489px">天赐</div>
<div class="row" style="top:508px;background:#d2ecf9"></div>
<div class="c" style="left:171px;top:509px">2023-07-1211:38</div>
<div class="cb" style="left:286px;top:511px"></div>
<div class="c" style="left:312px;width:32px;text-align:right;top:509px">14</div>
<div class="c" style="left:360px;top:509px;font-weight:bold;letter-spacing:0.55px">PI230712000005</div>
<div class="c" style="left:486px;top:509px;letter-spacing:-0.27px">TS23071200005</div>
<div class="c" style="left:607px;top:509px;letter-spacing:-0.47px">SYOCG202307120...</div>
<div class="c" style="left:727px;top:509px">通州蚂蚁仓</div>
<div class="c" style="left:819px;top:509px">睡雅家居</div>
<div class="c" style="left:904px;top:509px">老赵凉席</div>
<div class="row" style="top:528px;background:#acd3ef"></div>
<div class="c" style="left:171px;top:529px">2023-07-1211:27</div>
<div class="cb" style="left:286px;top:531px"></div>
<div class="c" style="left:312px;width:32px;text-align:right;top:529px">15</div>
<div class="c" style="left:360px;top:529px;font-weight:bold;letter-spacing:0.55px">PI230712000004</div>
<div class="c" style="left:486px;top:529px;letter-spacing:-0.27px">TS23071200004</div>
<div class="c" style="left:607px;top:529px;letter-spacing:-0.47px">SYOCG202307110...</div>
<div class="c" style="left:727px;top:529px">通州蚂蚁仓</div>
<div class="c" style="left:819px;top:529px">睡雅家居</div>
<div class="c" style="left:904px;top:529px">天赐</div>
<div class="row" style="top:548px;background:#d2ecf9"></div>
<div class="c" style="left:171px;top:549px">2023-07-1116:36</div>
<div class="cb" style="left:286px;top:551px"></div>
<div class="c" style="left:312px;width:32px;text-align:right;top:549px">16</div>
<div class="c" style="left:360px;top:549px;font-weight:bold;letter-spacing:0.55px">PI230711000012</div>
<div class="c" style="left:486px;top:549px;letter-spacing:-0.27px">TS23071100007</div>
<div class="c" style="left:607px;top:549px;letter-spacing:-0.47px">SYOCG202307110...</div>
<div class="c" style="left:727px;top:549px">通州蚂蚁仓</div>
<div class="c" style="left:819px;top:549px">睡雅家居</div>
<div class="c" style="left:904px;top:549px">今喜家纺</div>
<div class="row" style="top:568px;background:#acd3ef"></div>
<div class="c" style="left:171px;top:569px">2023-07-1017:51</div>
<div class="cb" style="left:286px;top:571px"></div>
<div class="c" style="left:312px;width:32px;text-align:right;top:569px">17</div>
<div class="c" style="left:360px;top:569px;font-weight:bold;letter-spacing:0.55px">PI230710000019</div>
<div class="c" style="left:486px;top:569px;letter-spacing:-0.27px">TS23071000017</div>
<div class="c" style="left:607px;top:569px;letter-spacing:-0.47px">SYOCG202307100...</div>
<div class="c" style="left:727px;top:569px">通州蚂蚁仓</div>
<div class="c" style="left:819px;top:569px">睡雅家居</div>
<div class="c" style="left:904px;top:569px">今喜家纺</div>
<div class="row" style="top:588px;background:#d2ecf9"></div>
<div class="c" style="left:171px;top:589px">2023-07-1015:29</div>
<div class="cb" style="left:286px;top:591px"></div>
<div class="c" style="left:312px;width:32px;text-align:right;top:589px">18</div>
<div class="c" style="left:360px;top:589px;font-weight:bold;letter-spacing:0.55px">PI230710000014</div>
<div class="c" style="left:486px;top:589px;letter-spacing:-0.27px">TS23071000012</div>
<div class="c" style="left:607px;top:589px;letter-spacing:-0.47px">SYOCG202307100...</div>
<div class="c" style="left:727px;top:589px">通州蚂蚁仓</div>
<div class="c" style="left:819px;top:589px">睡雅家居</div>
<div class="c" style="left:904px;top:589px">今喜家纺</div>
<div class="row" style="top:608px;background:#acd3ef"></div>
<div class="c" style="left:171px;top:609px">2023-07-1015:10</div>
<div class="cb" style="left:286px;top:611px"></div>
<div class="c" style="left:312px;width:32px;text-align:right;top:609px">19</div>
<div class="c" style="left:360px;top:609px;font-weight:bold;letter-spacing:0.55px">PI230710000010</div>
<div class="c" style="left:486px;top:609px;letter-spacing:-0.27px">TS23071000008</div>
<div class="c" style="left:607px;top:609px;letter-spacing:-0.47px">SYOCG202307100...</div>
<div class="c" style="left:727px;top:609px">通州蚂蚁仓</div>
<div class="c" style="left:819px;top:609px">睡雅家居</div>
<div class="c" style="left:904px;top:609px">紫兰玉</div>
<div class="row" style="top:628px;background:#d2ecf9"></div>
<div class="c" style="left:171px;top:629px">2023-07-1011:31</div>
<div class="cb" style="left:286px;top:631px"></div>
<div class="c" style="left:312px;width:32px;text-align:right;top:629px">20</div>
<div class="c" style="left:360px;top:629px;font-weight:bold;letter-spacing:0.55px">PI230710000004</div>
<div class="c" style="left:486px;top:629px;letter-spacing:-0.27px">TS23071000003</div>
<div class="c" style="left:607px;top:629px;letter-spacing:-0.47px">SYOCG202307100...</div>
<div class="c" style="left:727px;top:629px">通州蚂蚁仓</div>
<div class="c" style="left:819px;top:629px">睡雅家居</div>
<div class="c" style="left:904px;top:629px">馨雅</div>
<div class="row" style="top:648px;background:#acd3ef"></div>
<svg class="a" style="left:0;top:0" width="1184" height="649" fill="none" stroke="#ee1c1c" stroke-width="3.2">
<ellipse cx="57.8" cy="191.4" rx="49.4" ry="27.8"/>
<ellipse cx="409.4" cy="425.3" rx="50.7" ry="188.4" transform="rotate(0.46 409.4 425.3)"/>
<ellipse cx="936.6" cy="186.9" rx="72.8" ry="25.4"/>
</svg>
</body></html>
